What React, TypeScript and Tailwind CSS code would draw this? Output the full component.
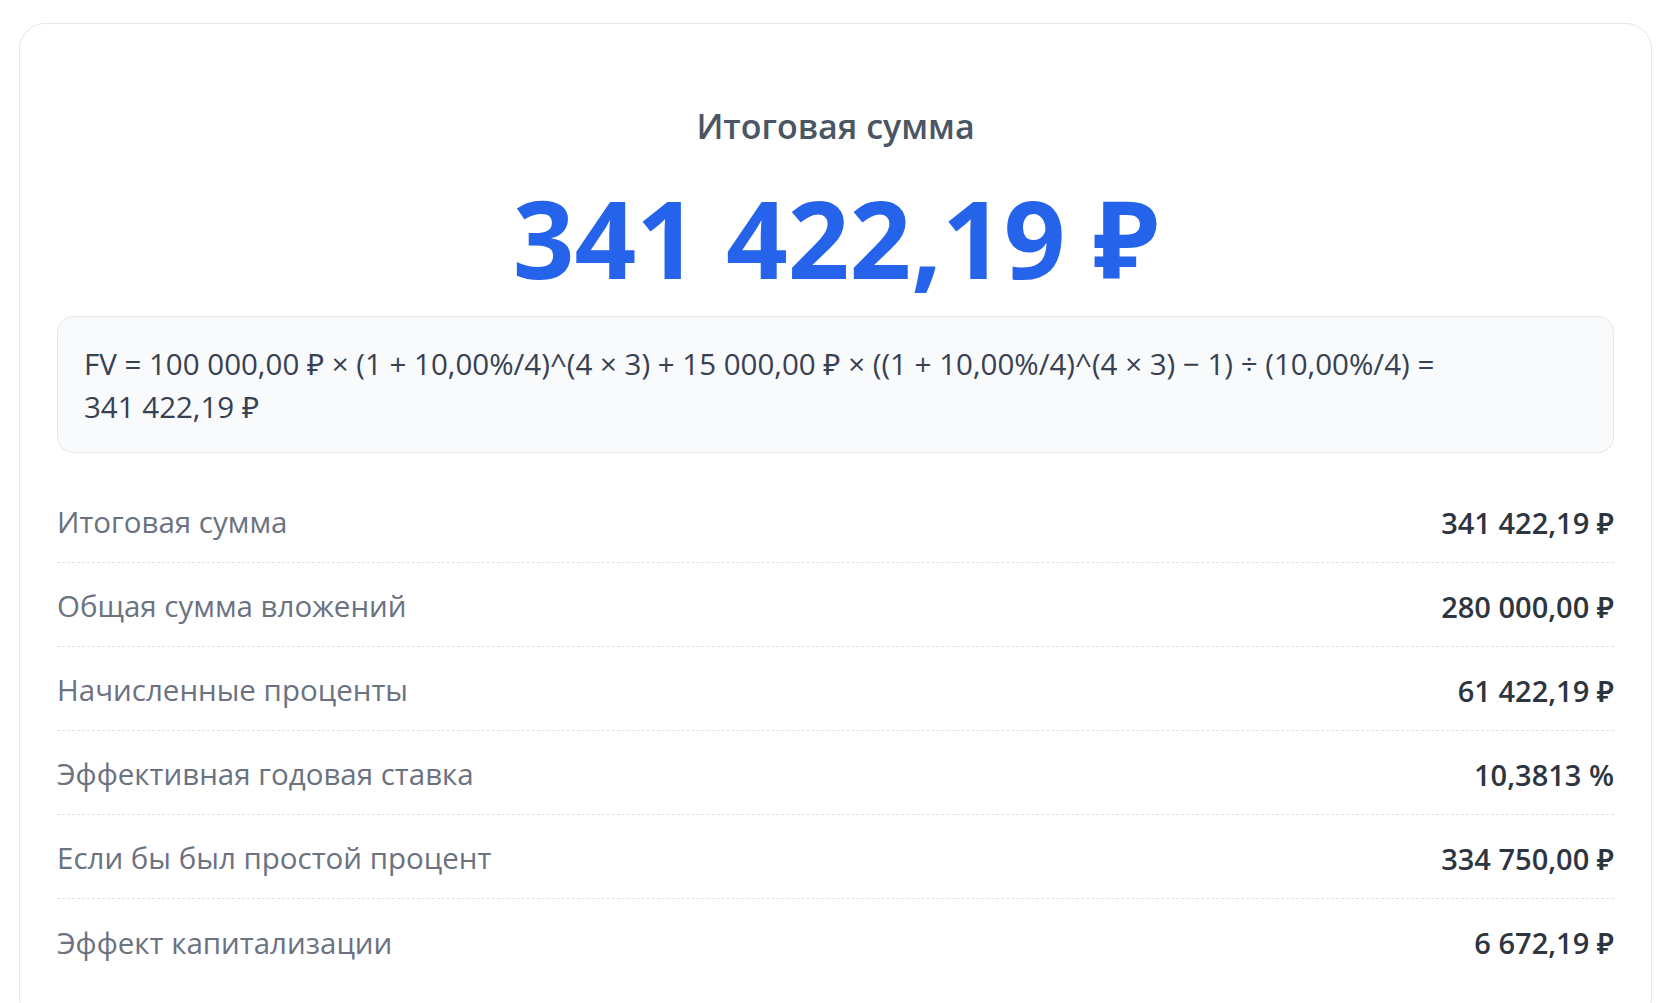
const rows = [
  { label: "Итоговая сумма", value: "341 422,19 ₽" },
  { label: "Общая сумма вложений", value: "280 000,00 ₽" },
  { label: "Начисленные проценты", value: "61 422,19 ₽" },
  { label: "Эффективная годовая ставка", value: "10,3813 %" },
  { label: "Если бы был простой процент", value: "334 750,00 ₽" },
  { label: "Эффект капитализации", value: "6 672,19 ₽" },
];

export default function App() {
  return (
    <div className="min-h-screen bg-white px-[19px] pt-[23px] font-['Open_Sans','Noto_Sans',sans-serif]">
      <div className="rounded-[26px] border border-[#e5e7eb] bg-white px-[37px] pt-[80px] pb-[40px]">
        {/* Итог */}
        <h2 className="text-center text-[34px] leading-[44px] font-semibold text-[#4b5563]">
          Итоговая сумма
        </h2>
        <div className="mt-[34px] text-center text-[108px] leading-[112px] font-bold text-[#2563eb]">
          341 422,19 ₽
        </div>

        {/* Формула расчёта */}
        <div className="mt-[22px] rounded-[16px] border border-[#e5e7eb] bg-[#f8fafc] px-[26px] pt-[26px] pb-[24px] text-[29.5px] leading-[42.5px] text-[#374151]">
          FV = 100 000,00 ₽ × (1 + 10,00%/4)^(4 × 3) + 15 000,00 ₽ × ((1 + 10,00%/4)^(4 × 3) − 1) ÷ (10,00%/4) =
          <br />
          341 422,19 ₽
        </div>

        {/* Детализация */}
        <div className="mt-[26px]">
          {rows.map((row) => (
            <div
              key={row.label}
              className="flex h-[84px] items-center justify-between border-b border-dashed border-[#dfe3e8] pt-[4px] last:border-b-0"
            >
              <span className="text-[29.5px] text-[#6b7280]">{row.label}</span>
              <span className="text-[29px] font-semibold text-[#2d3540]">{row.value}</span>
            </div>
          ))}
        </div>
      </div>
    </div>
  );
}
